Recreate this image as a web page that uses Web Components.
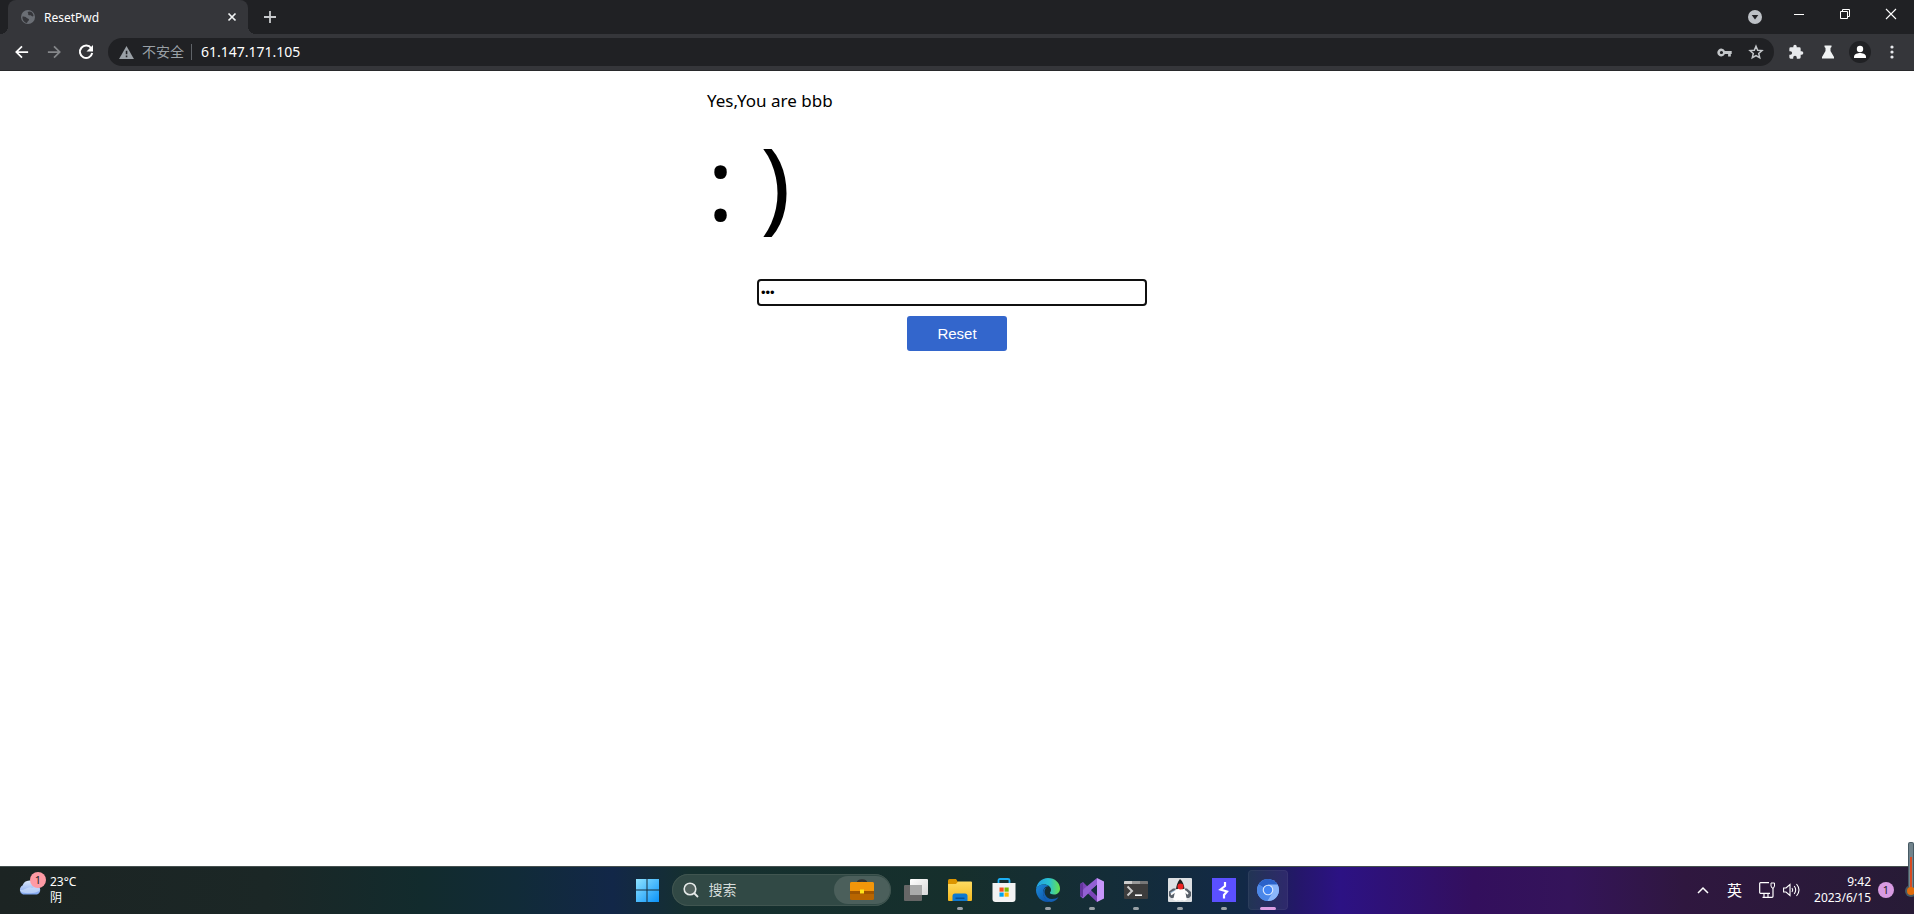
<!DOCTYPE html>
<html lang="zh-CN">
<head>
<meta charset="utf-8">
<title>ResetPwd</title>
<style>
html, body { margin: 0; height: 100%; }
body { font-family: "Noto Sans", "Noto Sans CJK SC", sans-serif; background: #fff; overflow: hidden; }
</style>
</head>
<body>
<desktop-shell>
  <browser-chrome slot="chrome"></browser-chrome>
  <reset-page slot="page"></reset-page>
  <task-bar slot="taskbar"></task-bar>
  <side-gauge slot="overlay"></side-gauge>
</desktop-shell>

<script>
const ICONS = {
  globe: ['0 0 16 16', '<circle cx="8" cy="8" r="7" fill="#6b6f75"/><path d="M2.500 7.500c1.500 0 3 .2 4 1.200s2.500.8 2.500 2-1.500 1.300-2 3.300C4 13.500 2 10.500 2.500 7.500zM7.500 3c1-.8 3-.8 4 0s2 2.500 2 4c-1 .8-2 .2-2.500-.5S9.500 6.500 8.500 6s.5-1.500-1-3z" fill="#35363a"/>'],
  close: ['0 0 10 10', '<path d="M1.500 1.500l7 7m0-7l-7 7" stroke="#f1f3f4" stroke-width="1.700"/>'],
  plus: ['0 0 12 12', '<path d="M6 0v12M0 6h12" stroke="#c8cacd" stroke-width="1.800"/>'],
  back: ['0 0 16 16', '<path d="M15 8H2M8 1.500L1.500 8 8 14.500" fill="none" stroke="#fff" stroke-width="2"/>'],
  forward: ['0 0 16 16', '<path d="M1 8h13M8 1.500L14.500 8 8 14.500" fill="none" stroke="#85878a" stroke-width="2"/>'],
  reload: ['0 0 16 16', '<path d="M13.200 4.200A6.200 6.200 0 1 0 14.200 9" fill="none" stroke="#fff" stroke-width="2"/><path d="M15 1v6.500H8.500z" fill="#fff"/>'],
  warn: ['0 0 16 14', '<path d="M8 0l8 14H0z" fill="#9aa0a6"/><path d="M7.200 5h1.700v4H7.200zm0 5.200h1.700V12H7.200z" fill="#202124"/>'],
  key: ['0 0 16 10', '<path fill="#c4c7ca" fill-rule="evenodd" d="M8.400 3.200H16v3.600h-1V9.500h-3V6.800H8.400A4.400 4.400 0 1 1 8.400 3.200zM4.600 3.200a1.800 1.800 0 1 0 0 3.600 1.800 1.800 0 0 0 0-3.600z"/>'],
  star: ['0 0 16 16', '<path d="M8 2.200l1.700 4 4.300.4-3.300 2.900 1 4.200L8 11.500l-3.700 2.200 1-4.200L2 6.600l4.300-.4z" fill="none" stroke="#c4c7ca" stroke-width="1.500"/>'],
  puzzle: ['0 0 24 24', '<path fill="#e8eaed" d="M20.500 11H19V7a2 2 0 0 0-2-2h-4V3.500a2.500 2.500 0 0 0-5 0V5H4a2 2 0 0 0-2 2v3.800h1.500a2.700 2.700 0 0 1 0 5.400H2V20a2 2 0 0 0 2 2h3.800v-1.500a2.700 2.700 0 0 1 5.400 0V22H17a2 2 0 0 0 2-2v-4h1.500a2.500 2.500 0 0 0 0-5z"/>'],
  flask: ['0 0 14 14', '<path fill="#f1f3f4" d="M3.500 0.500h7v1.500L9.500 3v3L13 12v1.500H1V12l3.500-6V3l-1-1z"/>'],
  user: ['0 0 22 22', '<circle cx="11" cy="11" r="11" fill="#202124"/><circle cx="11" cy="8" r="3.200" fill="#fff"/><path d="M5 17v-1.500c0-2.500 4-3.500 6-3.500s6 1 6 3.500V17z" fill="#fff"/>'],
  dots: ['0 0 4 14', '<g fill="#e8eaed"><circle cx="2" cy="2" r="1.600"/><circle cx="2" cy="7" r="1.600"/><circle cx="2" cy="12" r="1.600"/></g>'],
  tabsearch: ['0 0 14 14', '<circle cx="7" cy="7" r="7" fill="#bdc1c6"/><path d="M3.700 5h6.600L7 9.500z" fill="#202124"/>'],
  min: ['0 0 10 10', '<path d="M0 5.500h10" stroke="#fff"/>'],
  restore: ['0 0 10 10', '<path d="M.5 2.500h7v7h-7zM2.500 2.500v-2h7v7h-2" fill="none" stroke="#fff"/>'],
  winclose: ['0 0 10 10', '<path d="M0 0l10 10M10 0L0 10" stroke="#fff" stroke-width="1.100"/>'],
  cloud: ['0 0 24 16', '<defs><linearGradient id="a" x2="0" y2="1"><stop stop-color="#dce9fd"/><stop offset="1" stop-color="#7ea4ee"/></linearGradient></defs><path d="M5 15.500a5 5 0 0 1-.5-9A7.500 7.500 0 0 1 18.500 6a5 5 0 0 1 .5 9.500z" fill="url(#a)"/><path d="M2 11c4 1 9-5 12-2 3-2 7-1 8 1 0 5-20 6-20 1z" fill="#d2e2fd" opacity=".6"/>'],
  windows: ['0 0 24 24', '<defs><linearGradient id="a" x2="1" y2="1"><stop stop-color="#8fe3ff"/><stop offset="1" stop-color="#0a92fa"/></linearGradient></defs><path fill="url(#a)" d="M1 1h10.500v10.500H1zm11.500 0H24v10.500H12.500zM1 12.500h10.500V24H1zm11.500 0H24V24H12.500z"/>'],
  search: ['0 0 16 16', '<circle cx="7" cy="7" r="5.800" fill="#53635f" stroke="#e6eae9" stroke-width="1.600"/><path d="M11 11l4 4" stroke="#e6eae9" stroke-width="1.800"/>'],
  briefcase: ['0 0 24 20', '<path d="M8 3q0-2.500 4-2.500T16 3" fill="none" stroke="#333" stroke-width="2.500"/><rect y="2" width="24" height="18" rx="1.500" fill="#b86500"/><path d="M0 3.500Q0 2 1.500 2h21Q24 2 24 3.500V11H0z" fill="#f2960a"/><path d="M0 11h24v3H0z" fill="#9f5500"/><path d="M10 9.500h4v4h-4z" fill="#ffe31a"/>'],
  taskview: ['0 0 24 22', '<defs><linearGradient id="a" x2="1" y2="1"><stop stop-color="#fff"/><stop offset="1" stop-color="#d8d8d8"/></linearGradient></defs><rect y="6" width="18" height="16" rx="1" fill="#666"/><rect x="6" width="18" height="16" rx="1" fill="url(#a)"/><path d="M6 6h12v10H6z" fill="#a9aaaa"/>'],
  folder: ['0 0 24 22', '<defs><linearGradient id="a" x2="0" y2="1"><stop stop-color="#ffdc62"/><stop offset="1" stop-color="#f5b91e"/></linearGradient></defs><path d="M0 1.500Q0 0 1.500 0H8l2 3v5H0z" fill="#dc9500"/><path d="M0 5h8l2-2.500h13a1 1 0 0 1 1 1V21a1 1 0 0 1-1 1H1a1 1 0 0 1-1-1z" fill="url(#a)"/><path d="M4.500 22v-5q0-2.500 2.500-2.500h10q2.500 0 2.500 2.500v5z" fill="#0f79d0"/><path d="M7.500 18.500h9V20h-9z" fill="#085094"/>'],
  store: ['0 0 24 24', '<path d="M6.500 6V2.500Q6.500 1 8 1h8q1.500 0 1.500 1.500V6" fill="none" stroke="#1caff4" stroke-width="1.800"/><path d="M0.500 5h23v16q0 3-3 3h-17q-3 0-3-3z" fill="#f3f3f3"/><path d="M7.500 9.500h4.200v4.200H7.500z" fill="#f25022"/><path d="M12.500 9.500h4.200v4.200h-4.200z" fill="#7fba00"/><path d="M7.500 14.500h4.200v4.200H7.500z" fill="#00a4ef"/><path d="M12.500 14.500h4.200v4.200h-4.200z" fill="#ffb900"/>'],
  edge: ['0 0 24 24', '<defs><linearGradient id="a" x1="0" x2="1"><stop stop-color="#219fe4"/><stop offset=".55" stop-color="#2ac1d0"/><stop offset="1" stop-color="#68e14b"/></linearGradient><linearGradient id="b" x2="1" y2="1"><stop stop-color="#1c8ad8"/><stop offset="1" stop-color="#0b4ba4"/></linearGradient></defs><path d="M0 11.500C.6 5 5.500 0 12 0c7 0 12 5 12 10.500 0 4-3 6-6 6-2.500 0-4-.8-4-1.700 0-.7 1-1.200 1-3C15 9 12 6.500 8.500 6.500 4 6.500.8 8.500 0 11.500z" fill="url(#a)"/><path d="M0 12c0-3 3.500-5.500 8-5.500 2 0 3.500.7 4.700 1.800C9 8 7 11.500 7 14.500 7 19 11 23 15 23.500 6.500 25.500 0 19.500 0 12z" fill="url(#b)"/><path d="M10.500 9.500C6.500 13 9 21 16 21c3 0 5-1 6.500-2-1.500 3-4.500 4.800-7.500 4.900C10 23 7 19 7 15c0-3 1.500-5 3.500-5.500z" fill="#1460b4"/>'],
  vs: ['0 0 24 24', '<path d="M0 6l3-2 14 14v6L1 9v6l2 2-3 1z" fill="#7b45b8"/><path d="M0 18l3 2.500L17 7V0L0 14z" fill="#9360d4"/><path d="M0 6l3-1v14l-3-1z" fill="#65369f"/><path d="M17 0l7 3.500v17L17 24z" fill="#c795fa"/><path d="M11 12l6-5v10z" fill="#142e3c"/>'],
  terminal: ['0 0 24 18', '<rect width="24" height="18" rx="1" fill="#3d3d3d"/><path d="M0 1q0-1 1-1h7v3H0z" fill="#ccc"/><path d="M8 0h8v3H8z" fill="#999"/><path d="M16 0h7q1 0 1 1v2h-8z" fill="#777"/><path d="M3.500 5.500L8 10l-4.500 4.500" fill="none" stroke="#ccc" stroke-width="2"/><path d="M11 14.200h7" stroke="#fff" stroke-width="1.600"/>'],
  duke: ['0 0 24 24', '<rect width="24" height="24" rx="1" fill="#dde0e3"/><path d="M1 13.500l4-3h14l4 3.500v4l-2 2H3l-2-2z" fill="#59616a"/><path d="M3 14l4-2v3H2z" fill="#9dbdd8"/><path d="M8 10C6.500 14 6.500 18 5 21.500q3 2 5 .5 2 1 4 0 3 1.500 5-.5C17.500 18 18 14 16.500 10z" fill="#fff"/><path d="M12 1C9.500 4 8.500 7 8 11q2 .5 3-1 3 2 5.500.5C16 7 15 3.500 12 1z" fill="#202020"/><path d="M8 13l-5 3.500M17 13l3 3" stroke="#fff" stroke-width="1.800"/><circle cx="12.500" cy="8.500" r="3" fill="#ee2222"/>'],
  burp: ['0 0 24 24', '<path d="M0 0h24v24H0z" fill="#5b50ff"/><path d="M13 4v4L8.500 11.500l6.500 2L12 17v3.500" fill="none" stroke="#fff" stroke-width="2.200"/>'],
  chromium: ['0 0 22 22', '<circle cx="11" cy="11" r="11" fill="#669df6"/><path d="M11 11L1.500 5.500a11 11 0 0 1 19 0z" fill="#2b62ca"/><path d="M11 11L1.500 5.500A11 11 0 0 0 10.500 22l5.200-8.500z" fill="#4b87e8"/><path d="M11 5.500h9.500a11 11 0 0 1-10 16.500l5.200-8.500z" fill="#8ab6fa"/><circle cx="11" cy="11" r="5.300" fill="#dce9fd"/><circle cx="11" cy="11" r="4.200" fill="#4285f4"/>'],
  chevron: ['0 0 12 8', '<path d="M1 7l5-5 5 5" fill="none" stroke="#fff" stroke-width="1.500"/>'],
  network: ['0 0 16 16', '<path d="M10 .7H1.500q-.8 0-.8.8v9q0 .8.800.8h9.500M5 11.500v3.500M9 11.500v3.500M3.500 15.300H13q1 0 1-1V6" fill="none" stroke="#fff" stroke-width="1.200"/><path d="M12 1h3.500v3L14.500 6h-1.500L12 4z" fill="none" stroke="#fff"/>'],
  volume: ['0 0 17 14', '<path d="M.6 5v4H3l4 3.500v-11L3 5zM9 5q1.500 2 0 4M11.200 3q3 4 0 8M13.500 1q5 6 0 12" fill="none" stroke="#fff" stroke-width="1.100"/>']
};

function define(name, html, setup) {
  const template = document.createElement('template');
  template.innerHTML = html;
  customElements.define(name, class extends HTMLElement {
    constructor() {
      super();
      this.attachShadow({ mode: 'open' }).append(template.content.cloneNode(true));
    }
    connectedCallback() { if (setup) setup(this, this.shadowRoot); }
  });
}

define('ui-icon', `<style>:host{display:inline-flex;flex:none}svg{display:block;overflow:visible}</style><svg aria-hidden="true"></svg>`, (el, root) => {
  const [box, body] = ICONS[el.getAttribute('name')];
  const [, , w, h] = box.split(' ');
  const width = el.getAttribute('width') || w;
  const svg = root.querySelector('svg');
  svg.setAttribute('viewBox', box);
  svg.setAttribute('width', width);
  svg.setAttribute('height', Math.round(width * h / w));
  svg.innerHTML = body;
});

define('icon-button', `<style>
  :host{display:flex;flex:none;width:32px;height:28px}
  button{all:unset;display:flex;flex:1;align-items:center;justify-content:center}
</style><button type="button"><slot></slot></button>`, (el, root) => {
  root.querySelector('button').setAttribute('aria-label', el.getAttribute('label'));
});

define('desktop-shell', `<style>
  :host{display:flex;flex-direction:column;height:100vh;position:relative}
  main{flex:1;min-height:0}
</style><slot name="chrome"></slot><main><slot name="page"></slot></main><slot name="taskbar"></slot><slot name="overlay"></slot>`);

define('browser-tab', `<style>
  :host{display:flex;position:relative;align-items:center;width:240px;box-sizing:border-box;padding:0 11px 0 12px;gap:8px;background:#35363a;border-radius:8px 8px 0 0;color:#fff;font-size:12px}
  :host::before,:host::after{content:"";position:absolute;bottom:0;width:8px;height:8px}
  :host::before{right:100%;background:radial-gradient(circle at 0 0,#202124 8px,#35363a 8px)}
  :host::after{left:100%;background:radial-gradient(circle at 100% 0,#202124 8px,#35363a 8px)}
  span{flex:1}
  icon-button{width:10px}
</style><ui-icon name="globe"></ui-icon><span><slot></slot></span><icon-button label="关闭"><ui-icon name="close"></ui-icon></icon-button>`);

define('browser-chrome', `<style>
  :host{display:block;background:#35363a;border-bottom:1px solid #28292b}
  .strip{display:flex;height:34px;background:#202124;padding-left:8px}
  .strip > icon-button{height:34px}
  .strip > .plus{width:44px}
  .space{flex:1}
  .strip > .win{width:46px;height:28px}
  .strip > .tabs{width:42px;height:34px}
  .bar{display:flex;align-items:center;height:28px;padding:4px 6px}
  .address{display:flex;flex:1;align-items:center;height:28px;box-sizing:border-box;border-radius:14px;background:#202124;padding:0 2px 0 11px;margin-left:6px;margin-right:6px;font-size:14px;line-height:20px}
  .note{color:#9aa0a6;margin:0 7px 0 8px;padding-bottom:1px}
  .rule{width:1px;height:16px;background:#5f6368}
  input{all:unset;flex:1;color:#fff;padding:0 0 1px 9px}
</style>
<div class="strip"><browser-tab>ResetPwd</browser-tab><icon-button class="plus" label="打开新的标签页"><ui-icon name="plus"></ui-icon></icon-button><div class="space"></div><icon-button class="tabs" label="搜索标签页"><ui-icon name="tabsearch"></ui-icon></icon-button><icon-button class="win" label="最小化"><ui-icon name="min"></ui-icon></icon-button><icon-button class="win" label="还原"><ui-icon name="restore"></ui-icon></icon-button><icon-button class="win" label="关闭窗口"><ui-icon name="winclose"></ui-icon></icon-button></div>
<div class="bar">
  <icon-button label="后退"><ui-icon name="back" width="14"></ui-icon></icon-button>
  <icon-button label="前进"><ui-icon name="forward" width="14"></ui-icon></icon-button>
  <icon-button label="重新加载"><ui-icon name="reload"></ui-icon></icon-button>
  <div class="address"><ui-icon name="warn" width="15"></ui-icon><span class="note">不安全</span><span class="rule"></span><input type="text" aria-label="地址" value="61.147.171.105">
    <icon-button label="密码"><ui-icon name="key" width="15"></ui-icon></icon-button>
    <icon-button label="收藏"><ui-icon name="star"></ui-icon></icon-button></div>
  <icon-button label="扩展程序"><ui-icon name="puzzle" width="16"></ui-icon></icon-button>
  <icon-button label="实验"><ui-icon name="flask"></ui-icon></icon-button>
  <icon-button label="用户"><ui-icon name="user"></ui-icon></icon-button>
  <icon-button label="菜单"><ui-icon name="dots"></ui-icon></icon-button>
</div>`);

define('reset-page', `<style>
  :host{display:block;color:#000}
  section{width:500px;max-width:100%;margin:0 auto;padding-top:18px}
  p{margin:0;font-size:17px;line-height:24px}
  h1{margin:0;font-size:101px;line-height:138px;font-weight:400}
  form{display:flex;flex-direction:column;align-items:center;gap:10px;margin-top:28px}
  input{box-sizing:border-box;width:390px;height:27px;margin-right:10px;border:2px solid #101010;border-radius:4px;padding:1px 2px;font:13px "Liberation Sans",sans-serif;outline:none;background:#fff}
  button{width:100px;height:35px;border:0;border-radius:3px;background:#3366cc;color:#fff;font:15px "Liberation Sans",sans-serif}
</style>
<section><p>Yes,You are bbb</p><h1>: )</h1>
<form onsubmit="return false"><input type="password" value="bbb" aria-label="新密码" autocomplete="off"><button type="submit">Reset</button></form></section>`);

define('task-item', `<style>
  :host{display:flex;width:44px;height:46px;position:relative}
  button{all:unset;display:flex;flex:1;align-items:center;justify-content:center}
  :host([active]) button{margin:3px 2px;background:#ffffff10;border-radius:4px;box-shadow:inset 0 0 0 1px #ffffff0c}
  :host([running])::after,:host([active])::after{content:"";position:absolute;bottom:3px;left:19px;width:6px;height:3px;border-radius:2px;background:#98a0a6}
  :host([active])::after{left:14px;width:16px;background:#dd9fe3}
</style><button type="button"><slot></slot></button>`, (el, root) => {
  root.querySelector('button').setAttribute('aria-label', el.getAttribute('label'));
});

define('count-badge', `<style>
  :host{display:flex;align-items:center;justify-content:center;width:16px;height:16px;border-radius:50%;background:var(--badge);color:#222;font-size:11px;line-height:16px}
</style><slot></slot>`);

define('task-bar', `<style>
  :host{display:grid;grid-template-columns:1fr auto 1fr;align-items:center;height:46px;padding-bottom:1px;border-top:1px solid #45504f;color:#fff;font-size:12px;line-height:16px;
    background:linear-gradient(90deg,#1c2423 0%,#1b2726 14%,#122b2d 22%,#112b38 27%,#122748 32%,#15302f 36%,#162f2c 50%,#142d38 58%,#122946 65%,#25166c 68%,#2c1284 70%,#330f5d 77%,#34145a 82%,#2f173f 88%,#271b36 100%)}
  .weather{display:flex;align-items:center;gap:8px;padding-left:18px}
  .cloud{position:relative;display:flex;padding-bottom:6px}
  .cloud count-badge{--badge:#fe9aa4;position:absolute;right:-4px;top:-7px}
  .apps{display:flex;align-items:center}
  .search{display:flex;align-items:center;box-sizing:border-box;width:219px;height:32px;border-radius:16px;background:#314945;box-shadow:inset 0 0 0 1px #405550;margin:0 3px;padding:0 1px 0 11px;gap:10px}
  .search input{all:unset;flex:1;min-width:0;color:#d6dddb;font-size:14px}
  .search input::placeholder{color:#d6dddb;opacity:1}
  .gift{display:flex;align-items:center;justify-content:center;width:56px;height:28px;border-radius:14px;background:#4b5f5b}
  .tray{display:flex;align-items:center;justify-content:flex-end;padding-right:20px}
  .ime{font-size:15px;margin:0 17px 0 18px}
  .volume{margin-left:8px}
  .clock{text-align:right;margin:0 7px 0 14px}
  .tray count-badge{--badge:#d89be2}
</style>
<div class="weather"><span class="cloud"><ui-icon name="cloud"></ui-icon><count-badge>1</count-badge></span><span>23°C<br>阴</span></div>
<div class="apps"><task-item label="开始"><ui-icon name="windows"></ui-icon></task-item>
<div class="search"><ui-icon name="search"></ui-icon><input type="text" aria-label="搜索" placeholder="搜索"><span class="gift"><ui-icon name="briefcase"></ui-icon></span></div>
<task-item label="任务视图"><ui-icon name="taskview"></ui-icon></task-item><task-item label="文件资源管理器" running><ui-icon name="folder"></ui-icon></task-item><task-item label="应用商店"><ui-icon name="store"></ui-icon></task-item><task-item label="Edge" running><ui-icon name="edge"></ui-icon></task-item><task-item label="Visual Studio" running><ui-icon name="vs"></ui-icon></task-item><task-item label="终端" running><ui-icon name="terminal"></ui-icon></task-item><task-item label="Java" running><ui-icon name="duke"></ui-icon></task-item><task-item label="Burp Suite" running><ui-icon name="burp"></ui-icon></task-item><task-item label="Chromium" active><ui-icon name="chromium"></ui-icon></task-item></div>
<div class="tray"><ui-icon name="chevron"></ui-icon><span class="ime">英</span><ui-icon name="network"></ui-icon><ui-icon class="volume" name="volume"></ui-icon><span class="clock">9:42<br>2023/6/15</span><count-badge>1</count-badge></div>`);

define('side-gauge', `<style>
  :host{position:absolute;right:0;bottom:16px;width:9px;height:56px;overflow:hidden}
  svg{display:block}
</style><svg width="9" height="56" viewBox="0 0 9 56" aria-hidden="true"><circle cx="6" cy="49" r="6" fill="#465963"/><rect x="3" width="6" height="48" rx="2" fill="#465963"/><rect x="4" y="1" width="4" height="46" rx="1" fill="#71838c"/><rect x="5" y="15" width="2" height="32" fill="#d84a20"/><circle cx="6" cy="49" r="4" fill="#e06c0c"/></svg>`);
</script>
</body>
</html>
